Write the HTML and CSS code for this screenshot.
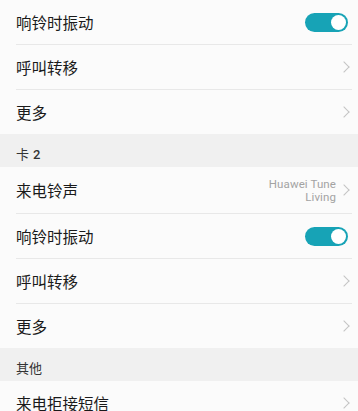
FILE: index.html
```html
<!DOCTYPE html>
<html lang="zh-CN">
<head>
    <meta charset="UTF-8">
    <meta name="viewport" content="width=device-width, initial-scale=1.0">
    <title>通话设置</title>
    <link rel="stylesheet" href="styles.css">
</head>
<body>
    <!-- 卡 1 -->
    <div class="list">
        <div class="item">
            <span class="label">响铃时振动</span>
            <span class="switch on"><span class="knob"></span></span>
        </div>
        <div class="item">
            <span class="label">呼叫转移</span>
            <span class="arrow"></span>
        </div>
        <div class="item">
            <span class="label">更多</span>
            <span class="arrow"></span>
        </div>
    </div>

    <div class="group-title">卡 <span class="num">2</span></div>
    <div class="list">
        <div class="item tall">
            <span class="label">来电铃声</span>
            <span class="value">Huawei Tune<br>Living</span>
            <span class="arrow"></span>
        </div>
        <div class="item">
            <span class="label">响铃时振动</span>
            <span class="switch on"><span class="knob"></span></span>
        </div>
        <div class="item">
            <span class="label">呼叫转移</span>
            <span class="arrow"></span>
        </div>
        <div class="item">
            <span class="label">更多</span>
            <span class="arrow"></span>
        </div>
    </div>

    <div class="group-title">其他</div>
    <div class="list">
        <div class="item">
            <span class="label">来电拒接短信</span>
            <span class="arrow"></span>
        </div>
    </div>
</body>
</html>
```

FILE: styles.css
```css
body {
    margin: 0;
    font-family: "Noto Sans CJK SC", "Noto Sans", sans-serif;
    background-color: #fafafa;
    color: #1a1a1a;
    overflow: hidden;
}
.list {
    background-color: #fbfbfb;
}
.item {
    display: flex;
    align-items: center;
    height: 44px;
    margin-left: 16px;
    margin-right: 6px;
    padding-right: 4px;
    border-bottom: 1px solid #e8e8e8;
}
.item:last-child {
    border-bottom: none;
}
.item.tall {
    height: 46px;
}
.label {
    flex: 1;
    font-size: 15.5px;
    line-height: 20px;
}
.value {
    font-family: Roboto, "Noto Sans", sans-serif;
    font-size: 11.5px;
    line-height: 13px;
    color: #a3a3a3;
    text-align: right;
    margin-right: 4px;
    margin-top: 1px;
    letter-spacing: 0.1px;
}
.arrow {
    width: 7px;
    height: 7px;
    border-top: 1px solid #c4c4c4;
    border-right: 1px solid #c4c4c4;
    transform: rotate(45deg);
    margin-right: 0;
}
.switch {
    position: relative;
    width: 43px;
    height: 19px;
    border-radius: 10px;
    background-color: #ccc;
}
.switch.on {
    background-color: #17a3b6;
}
.knob {
    position: absolute;
    top: 2px;
    left: 2px;
    width: 15px;
    height: 15px;
    border-radius: 50%;
    background-color: #fff;
}
.switch.on .knob {
    left: auto;
    right: 2px;
}
.group-title {
    box-sizing: border-box;
    height: 33px;
    padding: 12px 0 0 16px;
    line-height: 16px;
    background-color: #f0f0f0;
    font-size: 13px;
    color: #333;
}
.num {
    font-family: Roboto, sans-serif;
    font-weight: 500;
    margin-left: 1px;
}
```
